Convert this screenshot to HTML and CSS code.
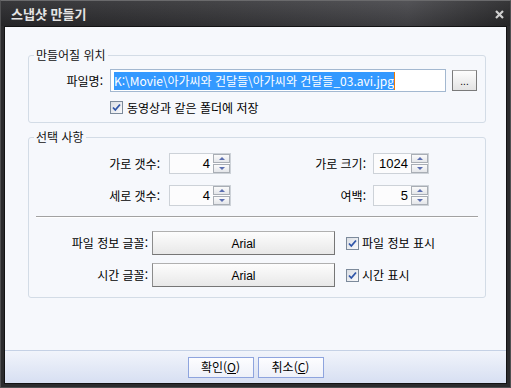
FILE: index.html
```html
<!DOCTYPE html>
<html lang="ko">
<head>
  <meta charset="UTF-8">
  <title>스냅샷 만들기</title>
  <link rel="stylesheet" href="styles.css">
</head>
<body>

  <div class="window">
    <!-- Title bar -->
    <div class="titlebar">
      <span class="title">스냅샷 만들기</span>
      <svg class="close" width="9" height="9" viewBox="0 0 9 9">
        <path d="M1 1 L8 8 M8 1 L1 8" stroke="#cfcfcf" stroke-width="2.2"/>
      </svg>
    </div>

    <div class="client">
      <div class="main">

        <!-- Output location -->
        <fieldset class="group group-place">
          <legend>만들어질 위치</legend>
          <div class="row file-row">
            <span class="label file-label">파일명:</span>
            <div class="text-field"><span class="sel">K:\Movie\아가씨와 건달들\아가씨와 건달들_03.avi.jpg</span><span class="caret"></span></div>
            <button class="browse-btn">...</button>
          </div>
          <label class="row check-row same-folder">
            <svg class="check" width="13" height="13" viewBox="0 0 13 13">
              <defs>
                <linearGradient id="cb" x1="0" y1="0" x2="1" y2="1">
                  <stop offset="0" stop-color="#d9dde3"/>
                  <stop offset="1" stop-color="#fbfbfc"/>
                </linearGradient>
              </defs>
              <rect x="0.5" y="0.5" width="12" height="12" fill="url(#cb)" stroke="#7c8a9b"/>
              <path d="M3 6.5 L5.3 9 L10 3.5" fill="none" stroke="#2f55a8" stroke-width="1.8"/>
            </svg>
            <span>동영상과 같은 폴더에 저장</span>
          </label>
        </fieldset>

        <!-- Options -->
        <fieldset class="group group-options">
          <legend>선택 사항</legend>
          <div class="row spin-row">
            <span class="label col1">가로 갯수:</span>
            <div class="spin spin-a"><span class="num">4</span><span class="spin-btns"><span class="up"></span><span class="down"></span></span></div>
            <span class="label col2">가로 크기:</span>
            <div class="spin spin-b"><span class="num">1024</span><span class="spin-btns"><span class="up"></span><span class="down"></span></span></div>
          </div>
          <div class="row spin-row second">
            <span class="label col1">세로 갯수:</span>
            <div class="spin spin-a"><span class="num">4</span><span class="spin-btns"><span class="up"></span><span class="down"></span></span></div>
            <span class="label col2">여백:</span>
            <div class="spin spin-b"><span class="num">5</span><span class="spin-btns"><span class="up"></span><span class="down"></span></span></div>
          </div>

          <div class="separator"></div>

          <div class="row font-row">
            <span class="label col-font">파일 정보 글꼴:</span>
            <button class="font-btn">Arial</button>
            <svg class="check" width="13" height="13" viewBox="0 0 13 13">
              <rect x="0.5" y="0.5" width="12" height="12" fill="url(#cb)" stroke="#7c8a9b"/>
              <path d="M3 6.5 L5.3 9 L10 3.5" fill="none" stroke="#2f55a8" stroke-width="1.8"/>
            </svg>
            <span class="check-text">파일 정보 표시</span>
          </div>
          <div class="row font-row second">
            <span class="label col-font">시간 글꼴:</span>
            <button class="font-btn">Arial</button>
            <svg class="check" width="13" height="13" viewBox="0 0 13 13">
              <rect x="0.5" y="0.5" width="12" height="12" fill="url(#cb)" stroke="#7c8a9b"/>
              <path d="M3 6.5 L5.3 9 L10 3.5" fill="none" stroke="#2f55a8" stroke-width="1.8"/>
            </svg>
            <span class="check-text">시간 표시</span>
          </div>
        </fieldset>

      </div>

      <!-- Bottom buttons -->
      <div class="footer">
        <button class="dlg-btn">확인(<u>O</u>)</button>
        <button class="dlg-btn">취소(<u>C</u>)</button>
      </div>
    </div>
  </div>

</body>
</html>
```

FILE: styles.css
```css
* {
  box-sizing: border-box;
}

body {
  margin: 0;
  font-family: "Noto Sans CJK KR", "Noto Sans", sans-serif;
  font-size: 12px;
  color: #000;
  background: #2a2a2c;
}

.window {
  width: 511px;
  height: 388px;
  display: flex;
  flex-direction: column;
  padding: 0 3px 3px;
  border: 1px solid #505052;
  border-top-color: #6a6a6c;
  background: #2b2b2d;
}

.titlebar {
  height: 25px;
  display: flex;
  align-items: center;
  justify-content: space-between;
  padding: 0 6px 0 7px;
  margin: 0 -3px;
  background:
    linear-gradient(to bottom, rgba(255,255,255,0.05), rgba(0,0,0,0.18)),
    linear-gradient(to right, #2d2d30 0%, #3a3a3d 40%, #4a4a4e 80%, #2c2c2e 100%);
}

.title {
  color: #e4e4e4;
  font-size: 13px;
  font-weight: 700;
  line-height: 16px;
  padding-left: 3px;
}

.close {
  margin-top: 1px;
}

.client {
  flex: 1;
  display: flex;
  flex-direction: column;
  border: 1px solid #131314;
  background: #f6f8fc;
}

.main {
  flex: 1;
  padding-top: 21px;
}

/* group boxes */
.group {
  margin: 0 20px 0 23px;
  padding: 0;
  min-width: 0;
  border: 1px solid #d3dce6;
  border-radius: 3px;
}

.group legend {
  margin-left: 5px;
  padding: 0 2px;
  line-height: 14px;
  color: #111;
}

.group-place {
  padding-top: 7px;
  padding-bottom: 8px;
}

.group-options {
  margin-top: 7px;
  padding-top: 9px;
  padding-bottom: 10px;
}

.row {
  display: flex;
  align-items: center;
}

.label {
  text-align: right;
  line-height: 14px;
  white-space: nowrap;
}

/* file row */
.file-row {
  height: 23px;
}

.file-label {
  width: 74px;
  margin-right: 7px;
}

.text-field {
  width: 336px;
  height: 23px;
  display: flex;
  align-items: center;
  padding-left: 3px;
  border: 1px solid #a3b8d0;
  background: #fff;
  white-space: nowrap;
  overflow: hidden;
}

.sel {
  background: #3399ff;
  color: #fff;
  line-height: 18px;
}

.caret {
  width: 1px;
  height: 18px;
  background: #f07800;
}

.browse-btn {
  width: 25px;
  height: 21px;
  margin-left: 6px;
  padding: 0 0 3px;
  border: 1px solid #7a7a7a;
  border-top-color: #a8a8a8;
  background: linear-gradient(#fdfdfd, #e3e3e3);
  font-family: "Liberation Sans", sans-serif;
  font-size: 10px;
  line-height: 10px;
  display: flex;
  align-items: flex-end;
  justify-content: center;
}

.check-row {
  margin-top: 9px;
  padding-left: 81px;
  height: 13px;
  gap: 4px;
  line-height: 13px;
}

.check {
  flex: none;
  display: block;
}

/* spin rows */
.spin-row {
  height: 21px;
}

.spin-row.second {
  margin-top: 11px;
}

.col1 {
  width: 131px;
  margin-right: 9px;
}

.col2 {
  width: 135px;
  margin-right: 7px;
}

.spin {
  height: 21px;
  display: flex;
  align-items: stretch;
  border: 1px solid #cdd2d8;
  background: #fcfcfd;
}

.spin-a {
  width: 62px;
}

.spin-b {
  width: 56px;
}

.num {
  flex: 1;
  text-align: right;
  padding-right: 3px;
  font-family: "Liberation Sans", sans-serif;
  font-size: 13px;
  line-height: 19px;
}

.spin-btns {
  width: 17px;
  display: flex;
  flex-direction: column;
  gap: 1px;
}

.spin-btns span {
  flex: 1;
  position: relative;
  border: 1px solid #a9aeb5;
  background: linear-gradient(#fbfbfb, #e4e6ea);
}

.spin-btns span::after {
  content: "";
  position: absolute;
  left: 50%;
  top: 50%;
  margin: -2px 0 0 -3px;
  border-left: 3px solid transparent;
  border-right: 3px solid transparent;
}

.spin-btns .up::after {
  border-bottom: 3px solid #5c6fb0;
}

.spin-btns .down::after {
  border-top: 3px solid #5c6fb0;
}

.separator {
  margin: 10px 7px 0 7px;
  border-top: 1px solid #a2a2a2;
  border-bottom: 1px solid #fff;
}

/* font rows */
.font-row {
  height: 24px;
  margin-top: 13px;
}

.font-row.second {
  margin-top: 8px;
}

.col-font {
  width: 119px;
  margin-right: 4px;
}

.font-btn {
  width: 183px;
  height: 24px;
  margin-right: 11px;
  padding: 1px 0 0;
  border: 1px solid #767676;
  border-top-color: #b0b0b0;
  border-left-color: #8c8c8c;
  background: linear-gradient(#fdfdfd, #e8e8e8);
  font-family: "Liberation Sans", sans-serif;
  font-size: 12px;
  color: #000;
}

.check-text {
  margin-left: 3px;
  line-height: 14px;
}

/* footer */
.footer {
  height: 33px;
  display: flex;
  justify-content: center;
  align-items: center;
  gap: 4px;
  border-top: 1px solid #c5d1e5;
  background: linear-gradient(#f1f4fb, #d7dff2);
}

.dlg-btn {
  width: 66px;
  height: 21px;
  padding: 0;
  border: 1px solid #8ea4de;
  background: linear-gradient(#fdfdff, #eef1f9);
  font-family: "Noto Sans CJK KR", sans-serif;
  font-size: 12px;
  line-height: 14px;
  color: #000;
}
```
